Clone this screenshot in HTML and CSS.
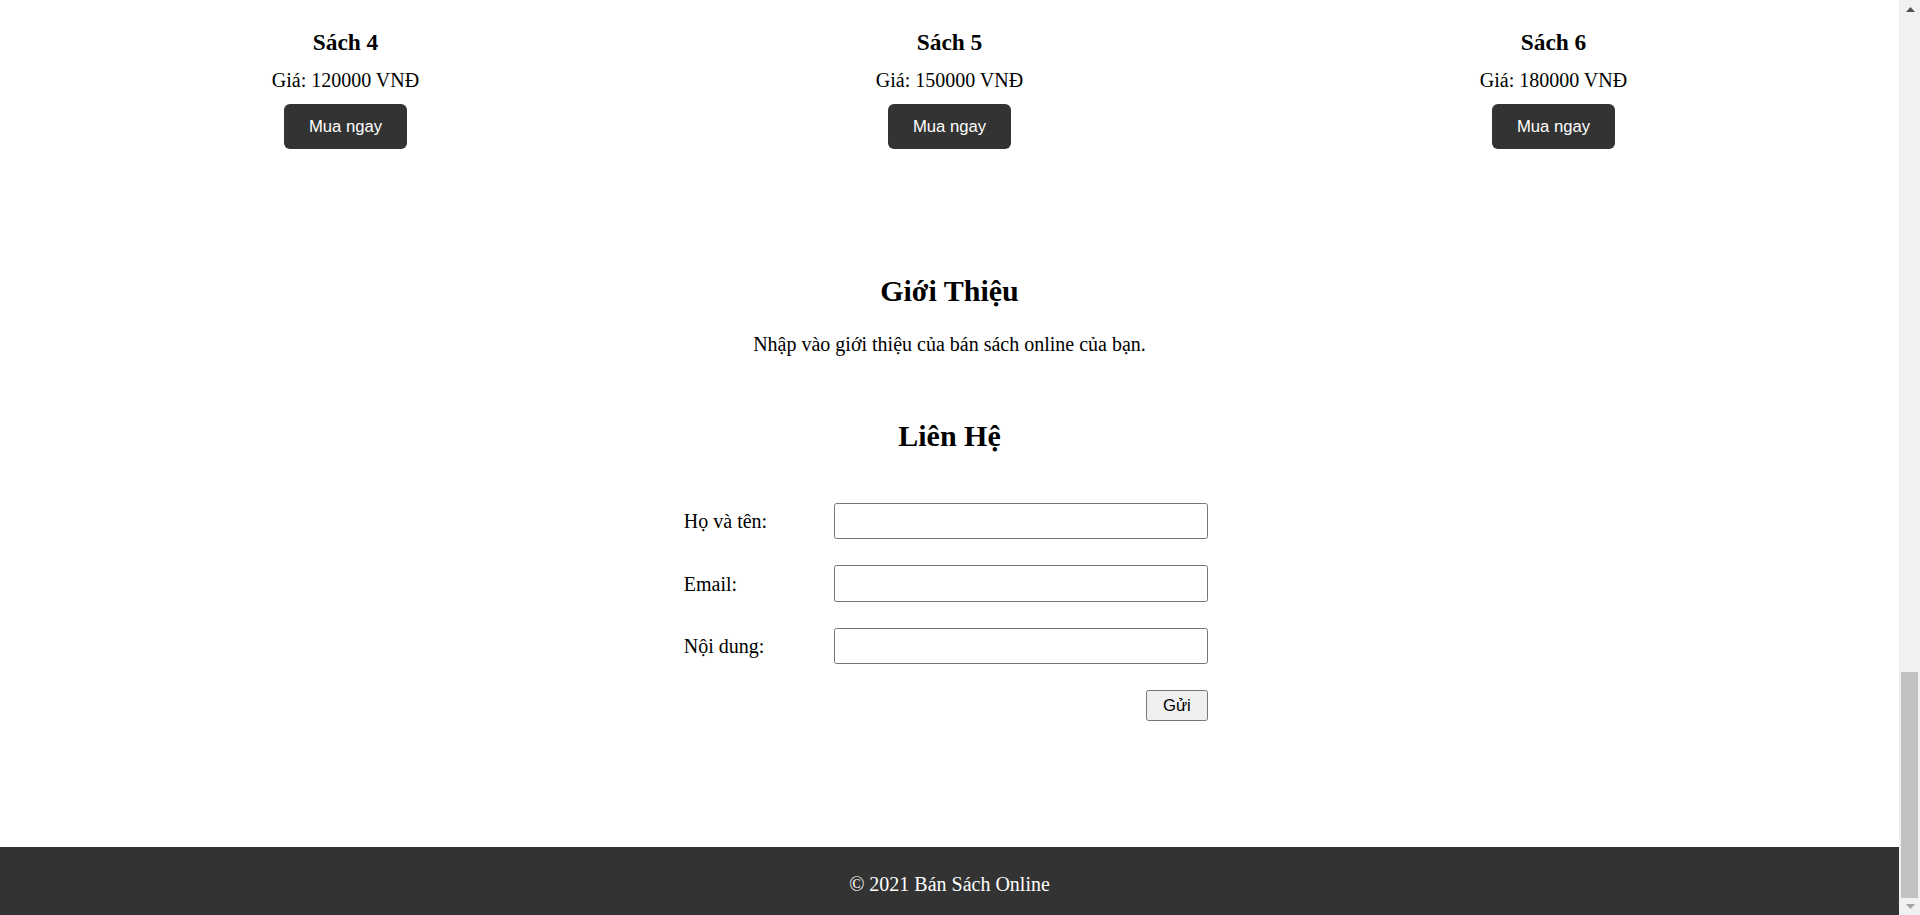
FILE: index.html
```html
<!DOCTYPE html>
<html lang="vi">
<head>
<meta charset="utf-8">
<title>Bán Sách Online</title>
<link rel="stylesheet" href="styles.css">
</head>
<body>
<div class="window">
  <div class="page">
    <section class="products">
      <div class="product">
        <h3 class="product-title">Sách 4</h3>
        <p class="product-price">Giá: 120000 VNĐ</p>
        <button class="buy-btn" type="button">Mua ngay</button>
      </div>
      <div class="product">
        <h3 class="product-title">Sách 5</h3>
        <p class="product-price">Giá: 150000 VNĐ</p>
        <button class="buy-btn" type="button">Mua ngay</button>
      </div>
      <div class="product">
        <h3 class="product-title">Sách 6</h3>
        <p class="product-price">Giá: 180000 VNĐ</p>
        <button class="buy-btn" type="button">Mua ngay</button>
      </div>
    </section>

    <section class="about">
      <h2 class="section-title">Giới Thiệu</h2>
      <p class="about-text">Nhập vào giới thiệu của bán sách online của bạn.</p>
    </section>

    <section class="contact">
      <h2 class="section-title">Liên Hệ</h2>
      <form class="contact-form">
        <label class="form-label" for="name">Họ và tên:</label>
        <input class="form-input" id="name" type="text">
        <label class="form-label" for="email">Email:</label>
        <input class="form-input" id="email" type="email">
        <label class="form-label" for="message">Nội dung:</label>
        <input class="form-input" id="message" type="text">
        <button class="submit-btn" type="button">Gửi</button>
      </form>
    </section>

    <footer class="footer">© 2021 Bán Sách Online</footer>
  </div>

  <div class="scrollbar">
    <div class="sb-button sb-up">
      <svg width="9" height="5" viewBox="0 0 9 5"><polygon points="0,5 9,5 4.5,0" fill="#505050"/></svg>
    </div>
    <div class="sb-track"></div>
    <div class="sb-thumb"></div>
    <div class="sb-button sb-down">
      <svg width="9" height="5" viewBox="0 0 9 5"><polygon points="0,0 9,0 4.5,5" fill="#a3a3a3"/></svg>
    </div>
  </div>
</div>
</body>
</html>
```

FILE: styles.css
```css
* {
  box-sizing: border-box;
}

html,
body {
  margin: 0;
  padding: 0;
}

body {
  font-family: "Liberation Serif", "Times New Roman", serif;
  color: #000;
  background: #fff;
  overflow: hidden;
}

.window {
  display: flex;
  width: 1920px;
  height: 915px;
}

.page {
  width: 1899px;
  flex: 0 0 1899px;
  display: flex;
  flex-direction: column;
}

/* Products */
.products {
  display: grid;
  grid-template-columns: repeat(3, 604px);
  padding-left: 43.5px;
}

.product {
  display: flex;
  flex-direction: column;
  align-items: center;
  text-align: center;
}

.product-title {
  margin: 27.6px 0 0;
  font-size: 23.4px;
  line-height: 28px;
  font-weight: bold;
}

.product-price {
  margin: 12.9px 0 0;
  font-size: 20px;
  line-height: 24px;
}

.buy-btn {
  margin-top: 11.5px;
  width: 123px;
  height: 45px;
  padding: 1.5px 0 0;
  border: none;
  border-radius: 6px;
  background: #333;
  color: #fff;
  font-family: "Liberation Sans", Arial, sans-serif;
  font-size: 16.67px;
}

/* Sections */
.about {
  margin-top: 124.4px;
  text-align: center;
}

.section-title {
  margin: 0;
  font-size: 30px;
  line-height: 35px;
  font-weight: bold;
}

.about-text {
  margin: 23.85px 0 0;
  font-size: 20px;
  line-height: 24px;
}

.contact {
  margin-top: 61.85px;
  text-align: center;
}

.contact-form {
  margin: 49.9px auto 0;
  width: 531.3px;
  padding-right: 7px;
  display: grid;
  grid-template-columns: 150.3px 374px;
  grid-auto-rows: 36.5px;
  row-gap: 26px;
  text-align: left;
}

.form-label {
  align-self: center;
  font-size: 20px;
  line-height: 24px;
}

.form-input {
  height: 36.5px;
  width: 374px;
  padding: 0 3px;
  border: 1px solid #767676;
  border-radius: 2.5px;
  background: #fff;
  font-family: "Liberation Sans", Arial, sans-serif;
  font-size: 16.67px;
}

.submit-btn {
  grid-column: 2;
  justify-self: end;
  align-self: start;
  width: 62px;
  height: 31px;
  margin-right: 0.3px;
  padding: 0;
  border: 1px solid #767676;
  border-radius: 2.5px;
  background: #efefef;
  color: #000;
  font-family: "Liberation Sans", Arial, sans-serif;
  font-size: 16.67px;
}

/* Footer */
.footer {
  margin-top: auto;
  height: 68px;
  padding-top: 24.5px;
  background: #333;
  color: #fff;
  text-align: center;
  font-size: 20px;
  line-height: 24px;
}

/* Scrollbar */
.scrollbar {
  flex: 0 0 21px;
  width: 21px;
  display: flex;
  flex-direction: column;
  background: #f1f1f1;
}

.sb-button {
  display: flex;
  align-items: center;
  justify-content: center;
  padding-left: 1px;
}

.sb-button svg {
  display: block;
}

.sb-up {
  height: 19px;
}

.sb-down {
  height: 17px;
}

.sb-track {
  flex: 1;
}

.sb-thumb {
  height: 225.6px;
  margin: 0 2px 0 2px;
  background: #c1c1c1;
}
```
